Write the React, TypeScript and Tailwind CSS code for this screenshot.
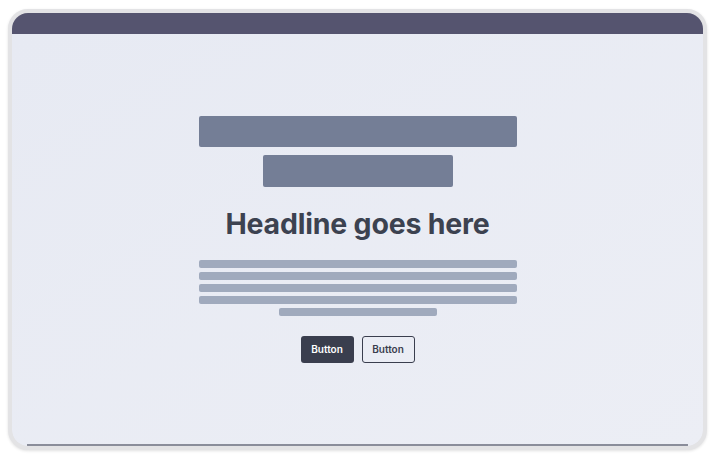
import React from 'react';

function TextLine({ w }: { w: string }) {
  return <div className={`h-[8px] rounded-[2px] bg-[#a0aabd] ${w}`} />;
}

export default function App() {
  return (
    <div className="w-[716px] h-[456px] bg-white pl-[8px] pr-[9px] pt-[9px] pb-[6px] font-['Inter',sans-serif]">
      <div className="h-full flex flex-col rounded-[20px] border-4 border-[#e3e3e5] shadow-[0_1px_3px_rgba(0,0,0,0.12)] overflow-hidden bg-[#e3e3e5]">
        <div className="h-[21px] shrink-0 bg-[#55546f]" />
        <div className="flex-1 flex flex-col items-center justify-center pb-[1px] bg-gradient-to-br from-[#e7eaf3] to-[#eceef5] rounded-b-[16px]">
          <div className="w-[318px] h-[31px] rounded-[2px] bg-[#747e96]" />
          <div className="w-[190px] h-[32px] mt-[8px] rounded-[2px] bg-[#747e96]" />
          <h1 className="mt-[19px] text-[28.5px] leading-[36px] font-bold text-[#3c4250] tracking-[-0.2px]">
            Headline goes here
          </h1>
          <div className="mt-[18px] flex flex-col items-center gap-[4px]">
            <TextLine w="w-[318px]" />
            <TextLine w="w-[318px]" />
            <TextLine w="w-[318px]" />
            <TextLine w="w-[318px]" />
            <TextLine w="w-[158px]" />
          </div>
          <div className="mt-[20px] flex gap-[8px]">
            <button className="w-[53px] h-[27px] rounded-[3px] bg-[#3a3e4e] text-white text-[10px] font-semibold">
              Button
            </button>
            <button className="w-[53px] h-[27px] rounded-[3px] border border-[#3a3e4e] bg-transparent text-[#3a3e4e] text-[10px] font-semibold">
              Button
            </button>
          </div>
        </div>
        <div className="h-[2px] shrink-0 mx-[15px] -mt-[2px] bg-[#8a8d9a]" />
      </div>
    </div>
  );
}
